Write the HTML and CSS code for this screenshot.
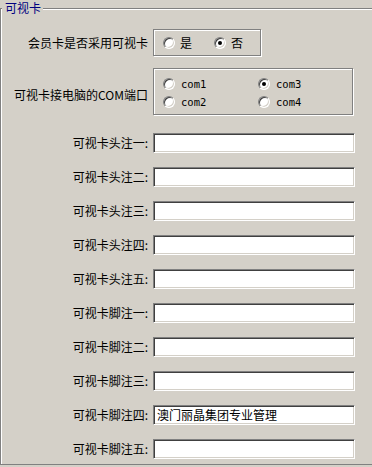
FILE: index.html
```html
<!DOCTYPE html>
<html lang="zh-CN">
<head>
    <meta charset="UTF-8">
    <title>可视卡</title>
    <link rel="stylesheet" href="styles.css">
</head>
<body>
    <div class="group">
        <div class="group-title">可视卡</div>

        <div class="row row-use">
            <div class="label">会员卡是否采用可视卡</div>
            <div class="etched use-box">
                <div class="option">
                    <span class="radio"></span>
                    <span class="opt-text">是</span>
                </div>
                <div class="option">
                    <span class="radio checked"></span>
                    <span class="opt-text">否</span>
                </div>
            </div>
        </div>

        <div class="row row-com">
            <div class="label label-com">可视卡接电脑的COM端口</div>
            <div class="etched com-box">
                <div class="option">
                    <span class="radio"></span>
                    <span class="com-text">com1</span>
                </div>
                <div class="option">
                    <span class="radio checked"></span>
                    <span class="com-text">com3</span>
                </div>
                <div class="option">
                    <span class="radio"></span>
                    <span class="com-text">com2</span>
                </div>
                <div class="option">
                    <span class="radio"></span>
                    <span class="com-text">com4</span>
                </div>
            </div>
        </div>

        <div class="fields">
            <div class="row">
                <div class="label">可视卡头注一:</div>
                <div class="field"></div>
            </div>
            <div class="row">
                <div class="label">可视卡头注二:</div>
                <div class="field"></div>
            </div>
            <div class="row">
                <div class="label">可视卡头注三:</div>
                <div class="field"></div>
            </div>
            <div class="row">
                <div class="label">可视卡头注四:</div>
                <div class="field"></div>
            </div>
            <div class="row">
                <div class="label">可视卡头注五:</div>
                <div class="field"></div>
            </div>
            <div class="row">
                <div class="label">可视卡脚注一:</div>
                <div class="field"></div>
            </div>
            <div class="row">
                <div class="label">可视卡脚注二:</div>
                <div class="field"></div>
            </div>
            <div class="row">
                <div class="label">可视卡脚注三:</div>
                <div class="field"></div>
            </div>
            <div class="row">
                <div class="label">可视卡脚注四:</div>
                <div class="field">澳门丽晶集团专业管理</div>
            </div>
            <div class="row">
                <div class="label">可视卡脚注五:</div>
                <div class="field"></div>
            </div>
        </div>
    </div>
</body>
</html>
```

FILE: styles.css
```css
body {
    margin: 0;
    background-color: #d4d0c8;
    font-family: "Noto Sans CJK SC", "Liberation Sans", sans-serif;
    font-size: 12px;
    color: #000;
    overflow: hidden;
}
.group {
    position: relative;
    margin-top: 8px;
    width: 380px;
    height: 455px;
    border: 1px solid #808080;
    box-shadow: inset 1px 1px 0 #fff, 0 1px 0 #fff;
}
.group-title {
    position: absolute;
    left: 1px;
    top: -9px;
    padding: 0 2px 0 3px;
    line-height: 16px;
    color: #000080;
    background-color: #d4d0c8;
}
.row {
    display: flex;
    align-items: center;
}
.label {
    width: 147px;
    margin-right: 5px;
    text-align: right;
    white-space: nowrap;
    line-height: 16px;
}
.etched {
    border: 1px solid #808080;
    box-shadow: inset 1px 1px 0 #fff, 1px 1px 0 #fff;
}
.row-use {
    margin-top: 20px;
}
.use-box {
    display: flex;
    align-items: center;
    gap: 22px;
    padding-left: 9px;
    box-sizing: border-box;
    width: 108px;
    height: 27px;
}
.row-com {
    margin-top: 12px;
}
.label-com {
    padding-top: 7px;
}
.com-box {
    display: grid;
    grid-template-columns: 95px 95px;
    grid-auto-rows: 12px;
    row-gap: 6px;
    width: 200px;
    height: 47px;
    padding: 9px 0 0 9px;
    box-sizing: border-box;
}
.option {
    display: flex;
    align-items: center;
    height: 12px;
}
.radio {
    position: relative;
    width: 10px;
    height: 10px;
    border: 1px solid;
    border-color: #808080 #fff #fff #808080;
    border-radius: 50%;
    background-color: #fff;
    box-shadow: inset 1px 1px 0 #404040, inset -1px -1px 0 #d4d0c8;
    flex-shrink: 0;
}
.radio.checked::after {
    content: "";
    position: absolute;
    left: 3px;
    top: 3px;
    width: 4px;
    height: 4px;
    border-radius: 50%;
    background-color: #000;
}
.opt-text {
    margin-left: 5px;
    line-height: 14px;
}
.com-text {
    margin-left: 6px;
    font-family: "DejaVu Sans Mono", "Liberation Mono", monospace;
    font-size: 10.5px;
    line-height: 12px;
}
.fields {
    display: flex;
    flex-direction: column;
    gap: 14px;
    margin-top: 18px;
}
.field {
    width: 202px;
    height: 20px;
    box-sizing: border-box;
    border: 1px solid;
    border-color: #808080 #fff #fff #808080;
    box-shadow: inset 1px 1px 0 #404040, inset -1px -1px 0 #d4d0c8;
    background-color: #fff;
    padding: 0 3px;
    line-height: 18px;
    white-space: nowrap;
}
```
